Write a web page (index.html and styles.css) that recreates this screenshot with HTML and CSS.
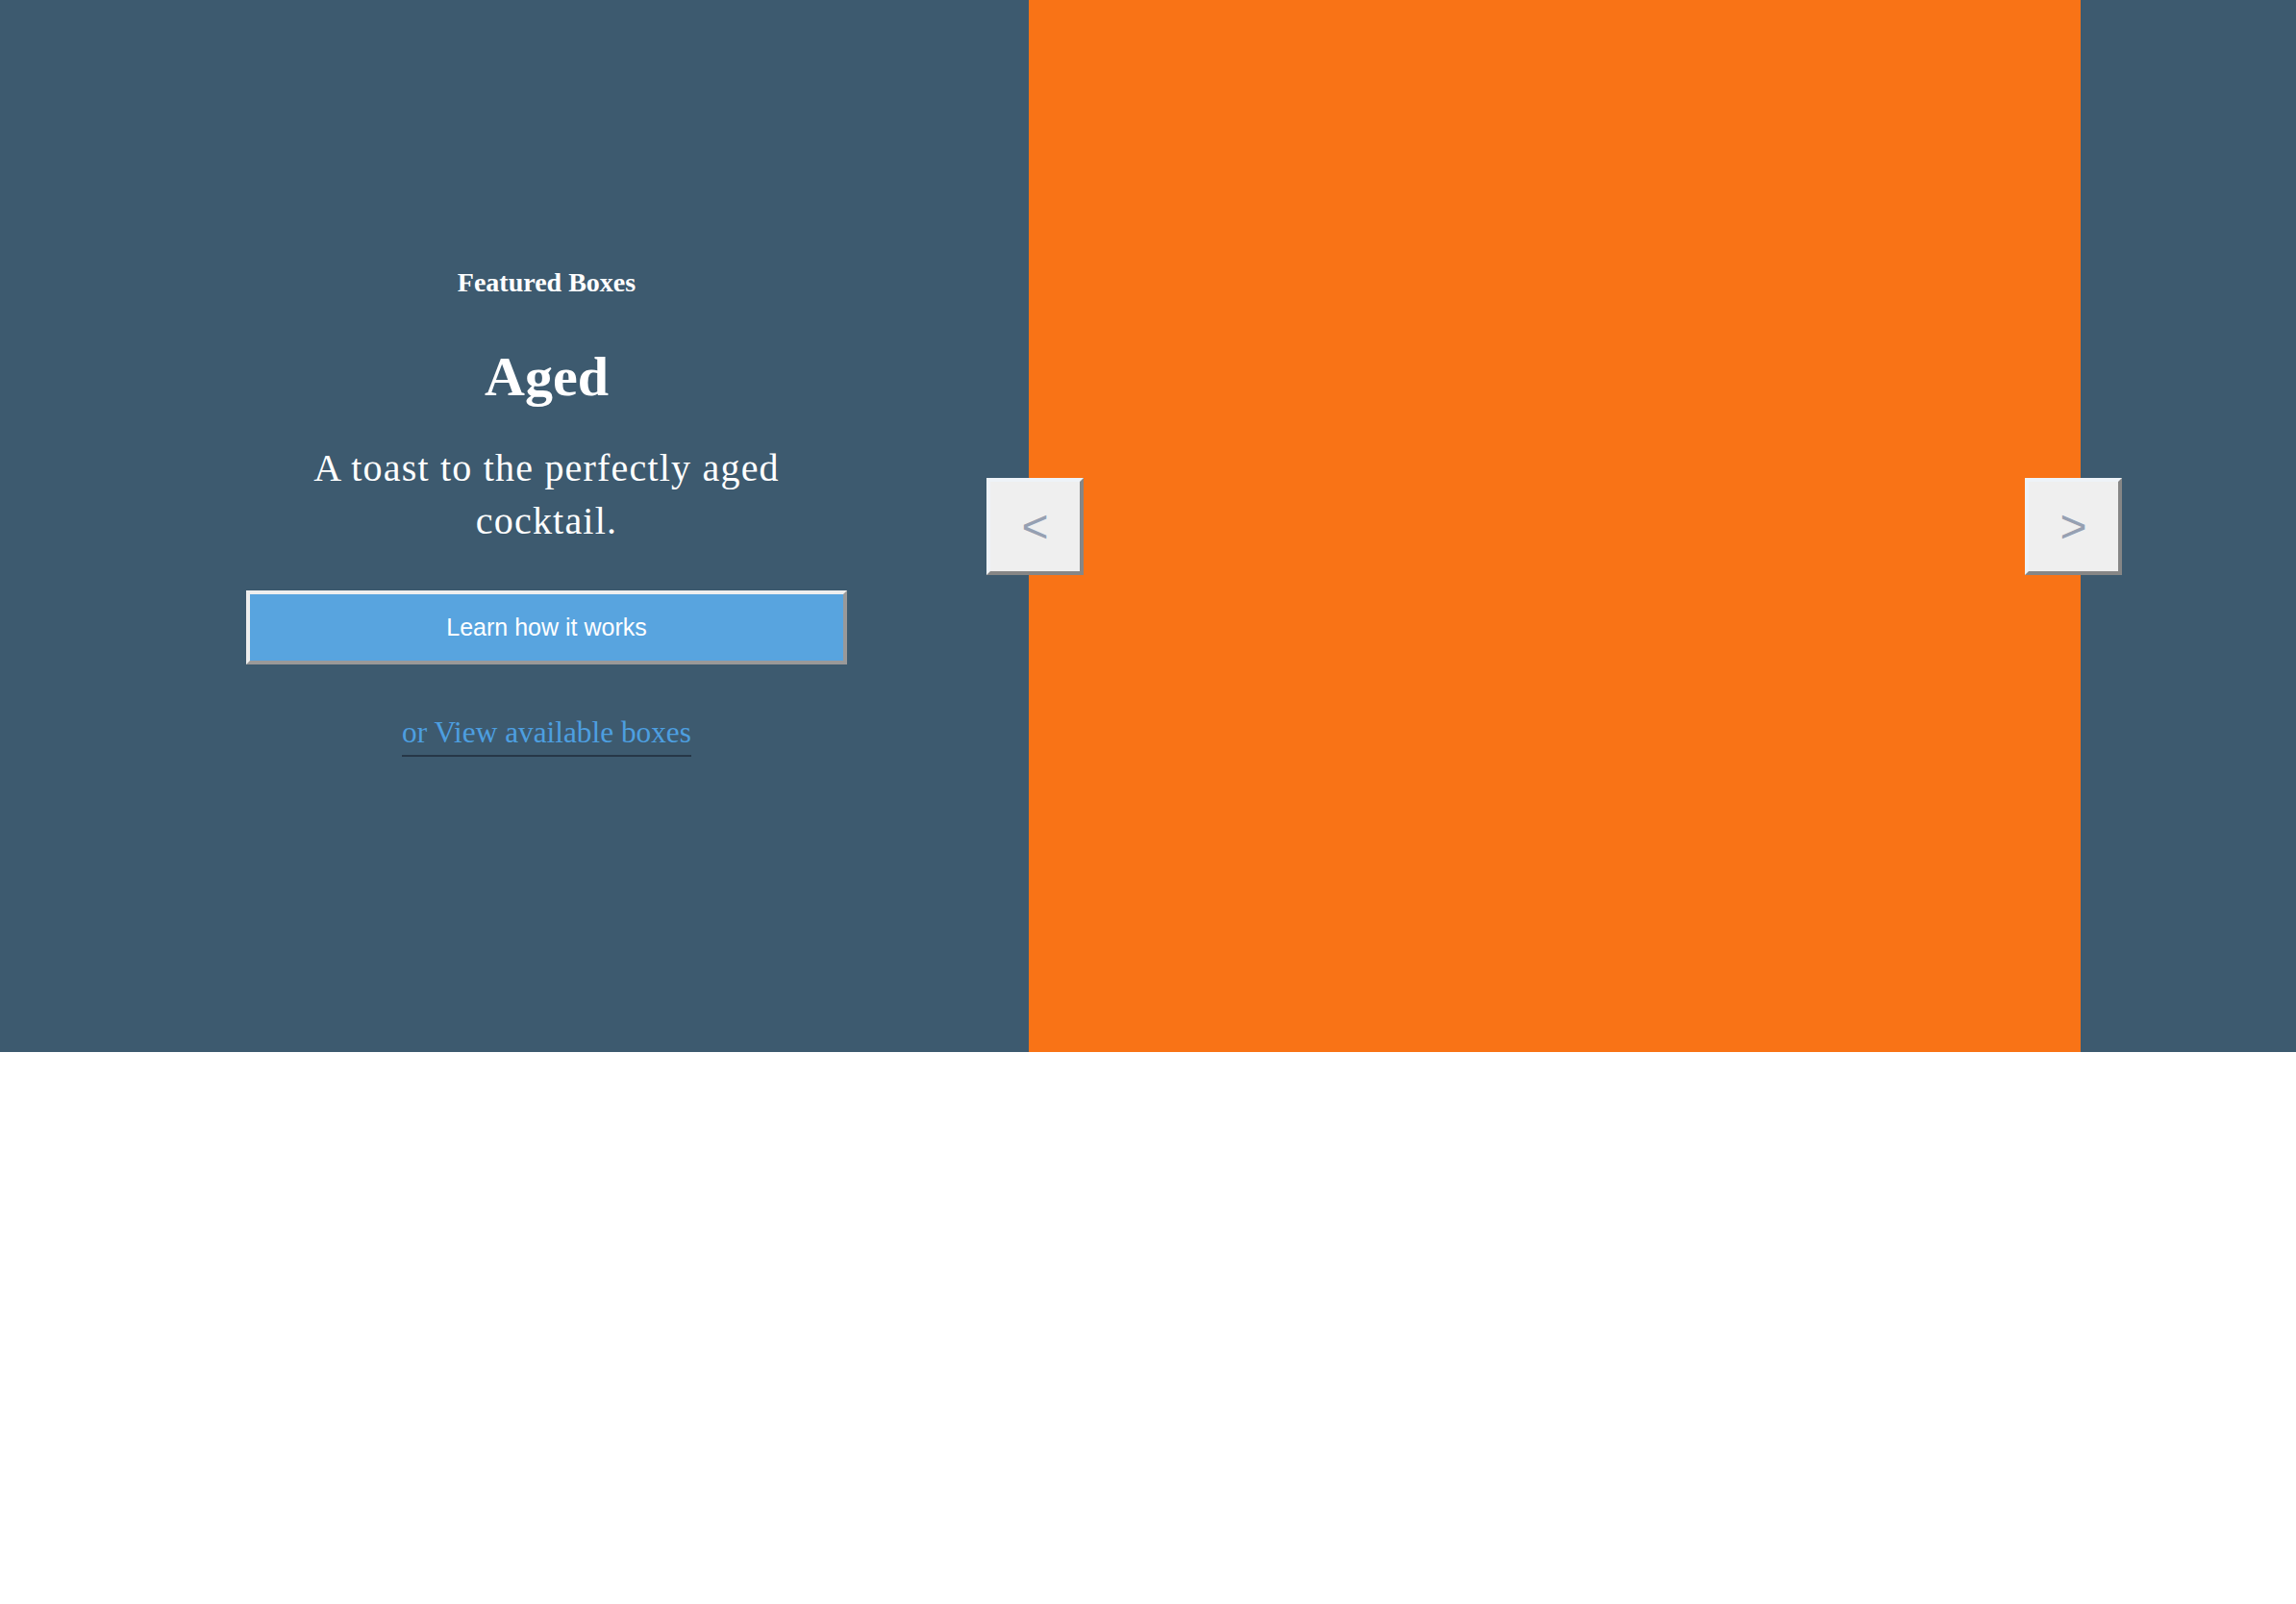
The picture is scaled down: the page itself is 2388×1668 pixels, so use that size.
FILE: index.html
```html
<!DOCTYPE html>
<html lang="en">
<head>
<meta charset="utf-8">
<title>Featured Boxes</title>
<link rel="stylesheet" href="styles.css">
</head>
<body>
<section class="hero">
  <div class="intro">
    <div class="intro-inner">
      <p class="eyebrow">Featured Boxes</p>
      <h1 class="title">Aged</h1>
      <p class="tagline">A toast to the perfectly aged cocktail.</p>
      <button class="cta" type="button">Learn how it works</button>
      <a class="more" href="#">or View available boxes</a>
    </div>
  </div>
  <div class="media">
    <button class="nav nav-prev" type="button">&lt;</button>
    <button class="nav nav-next" type="button">&gt;</button>
  </div>
  <div class="aside"></div>
</section>
</body>
</html>
```

FILE: styles.css
```css
html, body {
  margin: 0;
  padding: 0;
  background: #ffffff;
}

body {
  font-family: "Liberation Serif", "Times New Roman", serif;
}

.hero {
  display: flex;
  height: 1094px;
  background: #3d5a6f;
}

.intro {
  width: 1070px;
  flex: 0 0 1070px;
  box-sizing: border-box;
  padding-top: 278px;
  padding-left: 256px;
}

.intro-inner {
  width: 625px;
  display: flex;
  flex-direction: column;
  align-items: center;
  text-align: center;
  color: #ffffff;
}

.eyebrow {
  margin: 0;
  font-size: 28px;
  line-height: 32px;
  font-weight: bold;
}

.title {
  margin: 49px 0 0;
  font-size: 58px;
  line-height: 66px;
  font-weight: bold;
}

.tagline {
  margin: 34px 0 0;
  max-width: 560px;
  font-size: 40px;
  line-height: 55px;
  letter-spacing: 1.2px;
}

.cta {
  margin-top: 45px;
  width: 625px;
  height: 77px;
  box-sizing: border-box;
  border-width: 4px;
  border-style: solid;
  border-color: #eeeeee #999999 #999999 #eeeeee;
  background: #58a4df;
  color: #ffffff;
  font-family: "Liberation Sans", Arial, sans-serif;
  font-size: 25px;
  padding: 0;
}

.more {
  margin-top: 53px;
  display: inline-block;
  font-size: 31.3px;
  line-height: 36px;
  padding-bottom: 5px;
  color: #4d9fe0;
  text-decoration: none;
  border-bottom: 2px solid #263747;
}

.media {
  position: relative;
  flex: 0 0 1094px;
  width: 1094px;
  background: #f97316;
}

.aside {
  flex: 1 1 auto;
}

.nav {
  position: absolute;
  top: 497px;
  width: 101px;
  height: 101px;
  box-sizing: border-box;
  padding: 0;
  border-width: 4px;
  border-style: solid;
  border-color: #eef3f8 #868686 #868686 #eef3f8;
  background: #efefef;
  color: #96a0b2;
  font-family: "Liberation Sans", Arial, sans-serif;
  font-size: 48px;
  line-height: 1;
}

.nav-prev {
  left: -44px;
}

.nav-next {
  right: -43px;
}
```
